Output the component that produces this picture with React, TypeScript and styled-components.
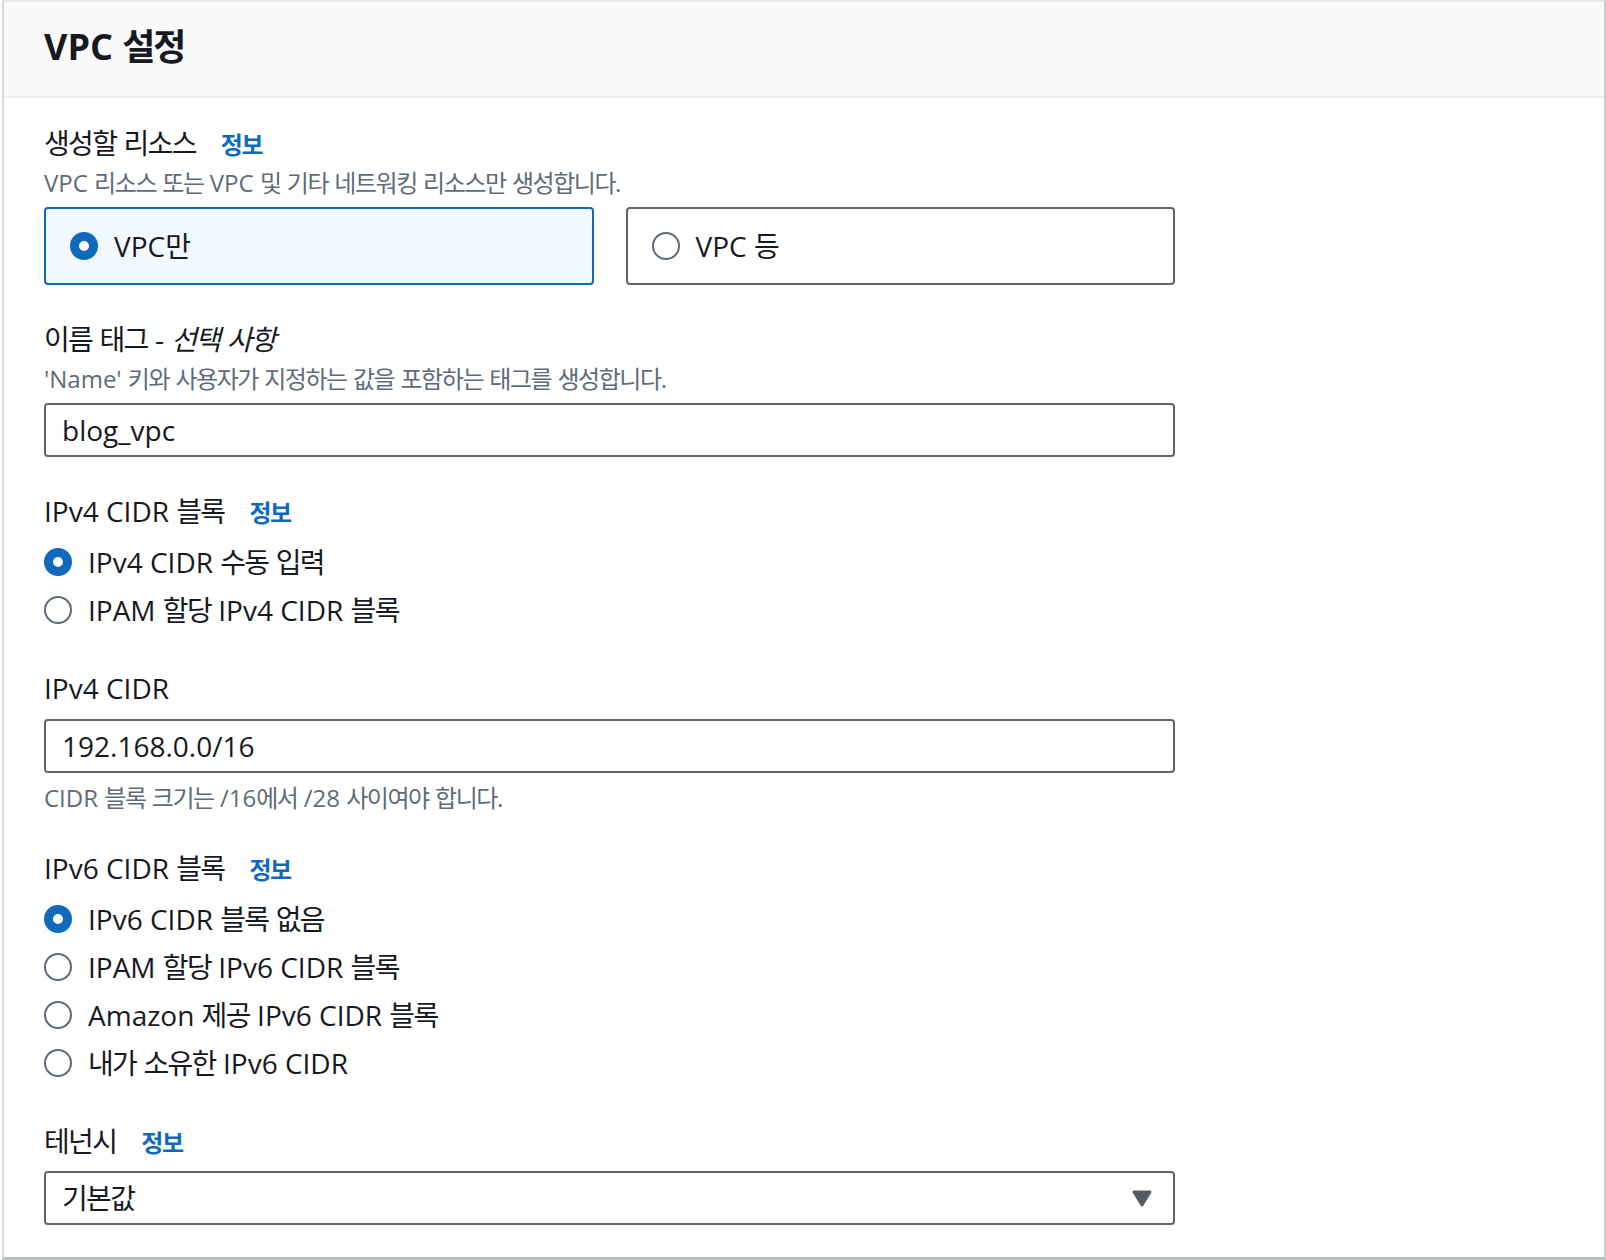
import React from 'react';
import styled, { createGlobalStyle } from 'styled-components';

const BLUE = '#0f69bd';
const TEXT = '#16191f';
const MUTED = '#5f6b7a';
const BORDER = '#5f6670';

const Global = createGlobalStyle`
  html, body { margin: 0; padding: 0; background: #ffffff; }
  body {
    font-family: "Open Sans", "Noto Sans CJK KR", sans-serif;
    color: ${TEXT};
  }
  *, *::before, *::after { box-sizing: border-box; }
`;

const Hangul = styled.span`
  line-height: 1;
  letter-spacing: -0.06em;
  font-weight: 400;
`;

const Page = styled.div`
  padding-left: 2px;
`;

const Panel = styled.section`
  width: 1604px;
  display: flex;
  flex-direction: column;
  border-top: 2px solid #e6e9e9;
  border-left: 2px solid #d5dada;
  border-right: 2px solid #c8cdcd;
  border-bottom: 3px solid #b9bfbf;
  background: #ffffff;
`;

const Header = styled.header`
  background: #fafafa;
  border-bottom: 2px solid #eaeded;
  padding: 23px 40px 27px;
`;

const Title = styled.h2`
  margin: 0;
  height: 44px;
  font-size: 36px;
  line-height: 44px;
  font-weight: 700;
  color: ${TEXT};

  ${Hangul} {
    font-weight: 700;
  }
`;

const Body = styled.div`
  padding: 25px 40px 32px;
  display: flex;
  flex-direction: column;
  gap: 34px;
`;

const Field = styled.div`
  display: flex;
  flex-direction: column;
  width: 1131px;
`;

const LabelRow = styled.div`
  display: flex;
  align-items: baseline;
  height: 40px;
  font-size: 28px;
  line-height: 40px;
  font-weight: 500;
  color: ${TEXT};
`;

const LabelText = styled.span`
  white-space: pre;
`;

const InfoLink = styled.a`
  margin-left: 25px;
  font-size: 24px;
  font-weight: 700;
  color: ${BLUE};
  text-decoration: none;
  cursor: pointer;

  ${Hangul} {
    font-weight: 700;
  }
`;

const Optional = styled.em`
  font-style: italic;
`;

const Description = styled.div<{ $gap?: number }>`
  margin-top: ${(p) => p.$gap ?? 4}px;
  height: 32px;
  font-size: 24px;
  line-height: 32px;
  color: ${MUTED};
  white-space: pre;
`;

const Control = styled.div<{ $gap: number }>`
  margin-top: ${(p) => p.$gap}px;
`;

const TileGrid = styled.div`
  display: grid;
  grid-template-columns: 1fr 1fr;
  gap: 32px;
`;

const Tile = styled.label<{ $selected?: boolean }>`
  height: 78px;
  display: flex;
  align-items: center;
  gap: 16px;
  padding: 0 24px;
  border: 2px solid ${(p) => (p.$selected ? BLUE : BORDER)};
  border-radius: 4px;
  background: ${(p) => (p.$selected ? '#f1f8fe' : '#ffffff')};
  font-size: 28px;
  line-height: 40px;
  font-weight: 500;
  color: ${TEXT};
  cursor: pointer;
`;

const RadioDot = styled.span<{ $checked?: boolean }>`
  flex: none;
  width: 28px;
  height: 28px;
  border-radius: 50%;
  background: #ffffff;
  border: ${(p) => (p.$checked ? `9px solid ${BLUE}` : `2px solid ${MUTED}`)};
`;

const RadioList = styled.div`
  display: flex;
  flex-direction: column;
`;

const RadioRow = styled.label`
  height: 48px;
  display: flex;
  align-items: center;
  gap: 16px;
  font-size: 28px;
  line-height: 40px;
  font-weight: 500;
  color: ${TEXT};
  cursor: pointer;
`;

const ItemText = styled.span`
  white-space: pre;
`;

const TextInput = styled.input`
  display: block;
  width: 100%;
  height: 54px;
  margin: 0;
  padding: 0 16px;
  border: 2px solid ${BORDER};
  border-radius: 4px;
  background: #ffffff;
  font-family: inherit;
  font-size: 28px;
  font-weight: 500;
  color: ${TEXT};
  outline: none;
`;

const SelectBox = styled.div`
  height: 54px;
  display: flex;
  align-items: center;
  padding: 0 21px 0 16px;
  border: 2px solid ${BORDER};
  border-radius: 4px;
  background: #ffffff;
  font-size: 28px;
  line-height: 40px;
  font-weight: 500;
  color: ${TEXT};
  cursor: pointer;
`;

const SelectValue = styled.span`
  flex: 1;
`;

const HANGUL = /([\u1100-\u11FF\u3130-\u318F\uAC00-\uD7AF]+)/;

const K = ({ children }: { children: string }) => (
  <>
    {children.split(HANGUL).map((part, i) =>
      i % 2 === 1 ? <Hangul key={i}>{part}</Hangul> : <React.Fragment key={i}>{part}</React.Fragment>
    )}
  </>
);

const Caret = () => (
  <svg width="20" height="17" viewBox="0 0 20 17" aria-hidden="true">
    <path
      d="M2 2 H18 L10 15 Z"
      fill="#545b64"
      stroke="#545b64"
      strokeWidth="3"
      strokeLinejoin="round"
    />
  </svg>
);

const Radio = ({ label, checked }: { label: string; checked?: boolean }) => (
  <RadioRow>
    <RadioDot $checked={checked} />
    <ItemText>
      <K>{label}</K>
    </ItemText>
  </RadioRow>
);

const Info = () => (
  <InfoLink>
    <K>정보</K>
  </InfoLink>
);

export default function App() {
  return (
    <Page>
      <Global />
      <Panel>
        <Header>
          <Title>
            <K>VPC 설정</K>
          </Title>
        </Header>
        <Body>
          <Field>
            <LabelRow>
              <LabelText>
                <K>생성할 리소스</K>
              </LabelText>
              <Info />
            </LabelRow>
            <Description>
              <K>VPC 리소스 또는 VPC 및 기타 네트워킹 리소스만 생성합니다.</K>
            </Description>
            <Control $gap={8}>
              <TileGrid>
                <Tile $selected>
                  <RadioDot $checked />
                  <ItemText>
                    <K>VPC만</K>
                  </ItemText>
                </Tile>
                <Tile>
                  <RadioDot />
                  <ItemText>
                    <K>VPC 등</K>
                  </ItemText>
                </Tile>
              </TileGrid>
            </Control>
          </Field>

          <Field>
            <LabelRow>
              <LabelText>
                <K>이름 태그 - </K>
                <Optional>
                  <K>선택 사항</K>
                </Optional>
              </LabelText>
            </LabelRow>
            <Description>
              <K>'Name' 키와 사용자가 지정하는 값을 포함하는 태그를 생성합니다.</K>
            </Description>
            <Control $gap={8}>
              <TextInput defaultValue="blog_vpc" />
            </Control>
          </Field>

          <Field>
            <LabelRow>
              <LabelText>
                <K>IPv4 CIDR 블록</K>
              </LabelText>
              <Info />
            </LabelRow>
            <Control $gap={7}>
              <RadioList>
                <Radio checked label="IPv4 CIDR 수동 입력" />
                <Radio label="IPAM 할당 IPv4 CIDR 블록" />
              </RadioList>
            </Control>
          </Field>

          <Field>
            <LabelRow>
              <LabelText>IPv4 CIDR</LabelText>
            </LabelRow>
            <Control $gap={11}>
              <TextInput defaultValue="192.168.0.0/16" />
            </Control>
            <Description $gap={9}>
              <K>CIDR 블록 크기는 /16에서 /28 사이여야 합니다.</K>
            </Description>
          </Field>

          <Field>
            <LabelRow>
              <LabelText>
                <K>IPv6 CIDR 블록</K>
              </LabelText>
              <Info />
            </LabelRow>
            <Control $gap={7}>
              <RadioList>
                <Radio checked label="IPv6 CIDR 블록 없음" />
                <Radio label="IPAM 할당 IPv6 CIDR 블록" />
                <Radio label="Amazon 제공 IPv6 CIDR 블록" />
                <Radio label="내가 소유한 IPv6 CIDR" />
              </RadioList>
            </Control>
          </Field>

          <Field>
            <LabelRow>
              <LabelText>
                <K>테넌시</K>
              </LabelText>
              <Info />
            </LabelRow>
            <Control $gap={10}>
              <SelectBox>
                <SelectValue>
                  <K>기본값</K>
                </SelectValue>
                <Caret />
              </SelectBox>
            </Control>
          </Field>
        </Body>
      </Panel>
    </Page>
  );
}
